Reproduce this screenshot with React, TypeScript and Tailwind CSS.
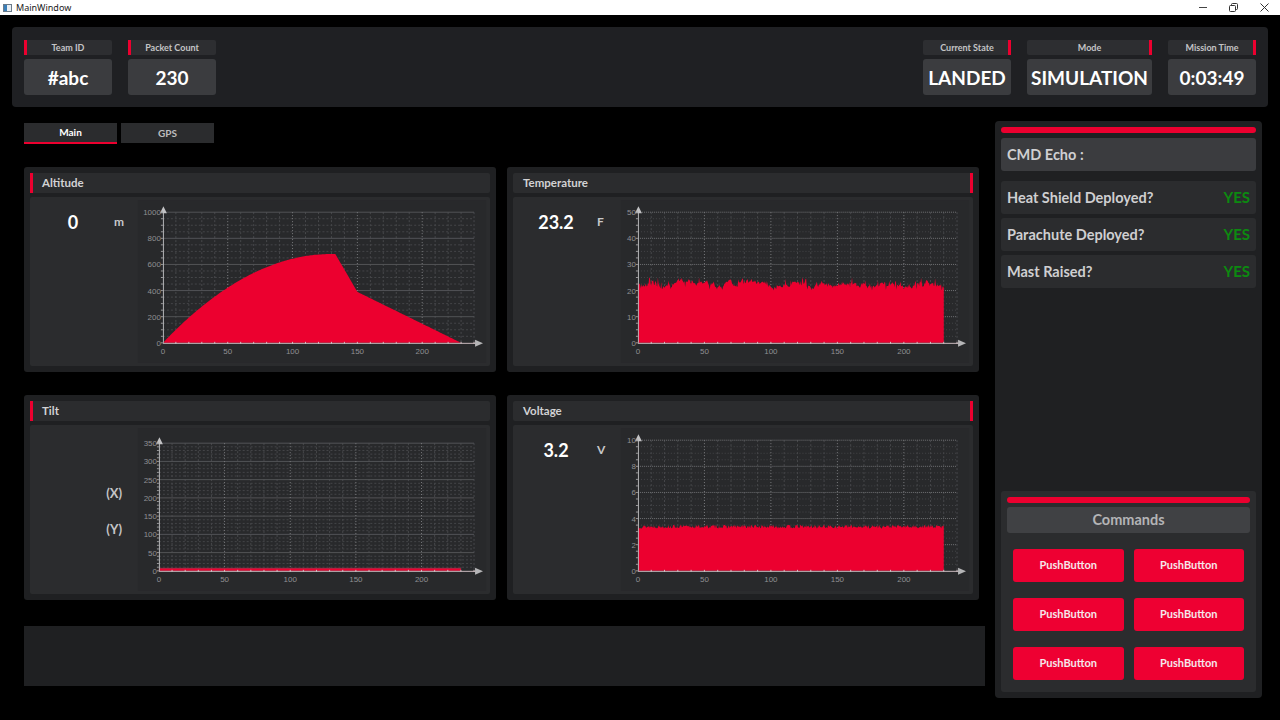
import React from "react";

const RED = "#ec002f";
const FONT = { fontFamily: "Lato, 'Open Sans', sans-serif" };

function rng(seed: number) {
  let a = seed;
  return () => {
    a |= 0;
    a = (a + 0x6d2b79f5) | 0;
    let t = Math.imul(a ^ (a >>> 15), 1 | a);
    t = (t + Math.imul(t ^ (t >>> 7), 61 | t)) ^ t;
    return ((t ^ (t >>> 14)) >>> 0) / 4294967296;
  };
}

type ChartProps = {
  x0: number;
  top: number;
  bottom: number;
  yMax: number;
  yLabels: number[];
  minorPer: number;
  dottedH?: boolean;
  kind: "alt" | "temp" | "tilt" | "volt";
};

function Chart({ x0, top, bottom, yMax, yLabels, minorPer, dottedH, kind }: ChartProps) {
  const right = 345;
  const xs = (u: number) => x0 + (u * (right - x0)) / 240;
  const ys = (v: number) => bottom - (v * (bottom - top)) / yMax;
  const step = yLabels[1] - yLabels[0];
  const minorStep = step / minorPer;

  const vMinor: number[] = [];
  const vMajor: number[] = [];
  for (let u = 10; u <= 240; u += 10) (u % 50 === 0 ? vMajor : vMinor).push(u);
  const hMinor: number[] = [];
  for (let v = minorStep; v <= yMax + 0.001; v += minorStep) {
    const isMajor = Math.abs(v / step - Math.round(v / step)) < 0.001;
    if (!isMajor) hMinor.push(v);
  }

  let area = "";
  if (kind === "alt") {
    const pts: string[] = [];
    for (let t = 0; t <= 230; t += 1) {
      let h: number;
      if (t <= 130) h = 680 * (1 - Math.pow(1 - t / 130, 2));
      else if (t <= 133) h = 680;
      else if (t <= 150) h = 680 - ((t - 133) / 17) * 290;
      else h = 390 - ((t - 150) / 80) * 390;
      pts.push(`${xs(t).toFixed(1)},${ys(h).toFixed(1)}`);
    }
    area = `M${xs(0)},${bottom} L${pts.join(" L")} L${xs(230)},${bottom} Z`;
  } else if (kind === "temp") {
    const r = rng(7);
    const pts: string[] = [];
    let walk = 0;
    for (let t = 0; t <= 230; t += 0.5) {
      walk = walk * 0.85 + (r() - 0.5) * 1.4;
      let v = 22.6 + walk + (r() - 0.5) * 1.2;
      if (r() > 0.93) v += 1.8;
      if (r() > 0.95) v -= 1.6;
      v = Math.max(20, Math.min(25, v));
      pts.push(`${xs(t).toFixed(1)},${ys(v).toFixed(1)}`);
    }
    area = `M${xs(0)},${bottom} L${pts.join(" L")} L${xs(230)},${bottom} Z`;
  } else if (kind === "volt") {
    const r = rng(13);
    const pts: string[] = [];
    for (let t = 0; t <= 230; t += 0.5) {
      const v = 3.38 + (r() - 0.5) * 0.28;
      pts.push(`${xs(t).toFixed(1)},${ys(v).toFixed(1)}`);
    }
    area = `M${xs(0)},${bottom} L${pts.join(" L")} L${xs(230)},${bottom} Z`;
  }

  return (
    <svg width={361} height={169} viewBox="0 0 361 169" className="block">
      <rect x={8} y={3} width={349} height={163} fill="#28292b" />
      {vMinor.map((u) => (
        <line key={"vm" + u} x1={xs(u)} x2={xs(u)} y1={top} y2={bottom} stroke="#47484b" strokeWidth={1} strokeDasharray="2 2" />
      ))}
      {hMinor.map((v, i) => (
        <line key={"hm" + i} x1={x0} x2={right} y1={ys(v)} y2={ys(v)} stroke="#444548" strokeWidth={1} strokeDasharray={dottedH ? "1 2" : "2 2"} />
      ))}
      {yLabels.filter((v) => v > 0).map((v) => (
        <line key={"hM" + v} x1={x0} x2={right} y1={ys(v)} y2={ys(v)} stroke={dottedH ? "#717275" : "#525356"} strokeWidth={1} strokeDasharray={dottedH ? "1 1" : undefined} />
      ))}
      {vMajor.map((u) => (
        <line key={"vM" + u} x1={xs(u)} x2={xs(u)} y1={top} y2={bottom} stroke="#7a7b7e" strokeWidth={1} strokeDasharray="1 2" />
      ))}
      {area && <path d={area} fill={RED} />}
      {kind === "tilt" && (
        <>
          <rect x={x0} y={bottom - 3} width={xs(230) - x0} height={3} fill="#b0203f" />
          <line x1={x0} x2={xs(230)} y1={bottom - 1} y2={bottom - 1} stroke={RED} strokeWidth={1.5} />
        </>
      )}
      <line x1={x0 + 0.5} x2={x0 + 0.5} y1={bottom} y2={top - 4} stroke="#b5b5b7" strokeWidth={1} />
      <polygon points={`${x0 - 3},${top + 1} ${x0 + 0.5},${top - 6} ${x0 + 4},${top + 1}`} fill="#c2c2c4" />
      {hMinor.concat(yLabels).map((v, i) => (
        <line key={"yt" + i} x1={x0 - 2} x2={x0} y1={ys(v)} y2={ys(v)} stroke="#9a9a9c" strokeWidth={1} />
      ))}
      <line x1={x0} x2={right + 4} y1={bottom + 0.5} y2={bottom + 0.5} stroke="#c9b9be" strokeWidth={1} />
      <polygon points={`${right + 1},${bottom - 3} ${right + 9},${bottom + 0.5} ${right + 1},${bottom + 4}`} fill="#b5b5b7" />
      {vMinor.concat(vMajor).map((u) => (
        <line key={"xt" + u} x1={xs(u)} x2={xs(u)} y1={bottom - 1} y2={bottom + 1} stroke="#d0c0c4" strokeWidth={1} />
      ))}
      {yLabels.map((v) => (
        <text key={"yl" + v} x={x0 - 2} y={ys(v) + 3} fontSize={8} fill="#8f8f92" textAnchor="end" fontFamily="'Liberation Sans', sans-serif">
          {v}
        </text>
      ))}
      {[0, 50, 100, 150, 200].map((u) => (
        <text key={"xl" + u} x={xs(u)} y={bottom + 11} fontSize={8} fill="#8f8f92" textAnchor="middle" fontFamily="'Liberation Sans', sans-serif">
          {u}
        </text>
      ))}
    </svg>
  );
}

function HeaderItem({ label, value, w, stripe }: { label: string; value: string; w: string; stripe: "left" | "right" }) {
  return (
    <div className={`flex flex-col gap-[4px] ${w}`}>
      <div className="relative h-[15px] bg-[#2d2e31] rounded-[2px] flex items-center justify-center">
        <div className={`absolute top-0 bottom-0 w-[3px] bg-[#ec002f] ${stripe === "left" ? "left-0" : "right-0"}`} />
        <span className="text-[9px] font-bold text-[#c4c4c6] leading-none">{label}</span>
      </div>
      <div className="h-[36px] bg-[#3b3c3f] rounded-[3px] flex items-center justify-center">
        <span className="text-[19px] font-bold text-white leading-none">{value}</span>
      </div>
    </div>
  );
}

function Panel({
  title,
  stripe,
  left,
  chart,
}: {
  title: string;
  stripe: "left" | "right";
  left: React.ReactNode;
  chart: React.ReactNode;
}) {
  return (
    <div className="h-[205px] bg-[#1f2022] rounded-[3px] p-[6px] flex flex-col gap-[4px]">
      <div className={`relative h-[20px] bg-[#2b2c2e] rounded-[2px] flex items-center ${stripe === "left" ? "pl-[12px]" : "pl-[10px]"}`}>
        <div className={`absolute top-0 bottom-0 w-[3px] bg-[#ec002f] ${stripe === "left" ? "left-0" : "right-0"}`} />
        <span className="text-[11.5px] font-bold text-[#d2d2d4]">{title}</span>
      </div>
      <div className="h-[169px] bg-[#2b2c2e] rounded-[2px] flex">
        <div className="w-[100px] shrink-0">{left}</div>
        {chart}
      </div>
    </div>
  );
}

function ValueUnit({ value, unit }: { value: string; unit: string }) {
  return (
    <div className="flex items-center pt-[13px] h-[37px] pl-[8px]">
      <span className="w-[70px] text-center text-[18px] font-bold text-white leading-[24px]">{value}</span>
      <span className="ml-[6px] text-[12px] font-bold text-[#c8c8ca] leading-[24px]">{unit}</span>
    </div>
  );
}

function StatusRow({ label }: { label: string }) {
  return (
    <div className="h-[33px] bg-[#2b2c2e] rounded-[3px] flex items-center justify-between px-[6px]">
      <span className="text-[14.5px] font-bold text-[#cfcfd1]">{label}</span>
      <span className="text-[15px] font-bold text-[#0c8a10]">YES</span>
    </div>
  );
}

export default function App() {
  return (
    <div className="w-[1280px] h-[720px] bg-black flex flex-col overflow-hidden" style={FONT}>
      <div className="h-[15px] bg-white flex items-center justify-between shrink-0">
        <div className="flex items-center gap-[4px] pl-[3px]">
          <div className="w-[9px] h-[8px] border border-[#6b7b8a] bg-[#e8eef4] flex">
            <div className="w-[3px] h-full bg-[#3a7fb8]" />
          </div>
          <span className="text-[9px] text-[#1a1a1a] leading-none" style={{ fontFamily: "'Noto Sans', sans-serif" }}>
            MainWindow
          </span>
        </div>
        <div className="flex items-center h-full text-[#222]">
          <div className="w-[30px] flex justify-center">
            <div className="w-[8px] h-px bg-[#444]" />
          </div>
          <div className="w-[30px] flex justify-center">
            <svg width="9" height="9" viewBox="0 0 9 9">
              <rect x="0.5" y="2.5" width="6" height="6" fill="none" stroke="#333" strokeWidth="1" rx="1" />
              <path d="M2.5 2.5 V1.5 a1 1 0 0 1 1 -1 H7.5 a1 1 0 0 1 1 1 V5.5 a1 1 0 0 1 -1 1 H6.5" fill="none" stroke="#333" strokeWidth="1" />
            </svg>
          </div>
          <div className="w-[32px] flex justify-center">
            <svg width="9" height="9" viewBox="0 0 9 9">
              <path d="M0.5 0.5 L8.5 8.5 M8.5 0.5 L0.5 8.5" stroke="#333" strokeWidth="1" />
            </svg>
          </div>
        </div>
      </div>

      <div className="px-[12px] pt-[12px] flex flex-col">
        <div className="h-[80px] bg-[#1f2023] rounded-[4px] pl-[12px] pr-[12px] pt-[13px] flex justify-between">
          <div className="flex gap-[16px]">
            <HeaderItem label="Team ID" value="#abc" w="w-[88px]" stripe="left" />
            <HeaderItem label="Packet Count" value="230" w="w-[88px]" stripe="left" />
          </div>
          <div className="flex gap-[16px]">
            <HeaderItem label="Current State" value="LANDED" w="w-[88px]" stripe="right" />
            <HeaderItem label="Mode" value="SIMULATION" w="w-[125px]" stripe="right" />
            <HeaderItem label="Mission Time" value="0:03:49" w="w-[88px]" stripe="right" />
          </div>
        </div>

        <div className="flex mt-[14px] gap-[10px]">
          <div className="ml-[12px] w-[961px] flex flex-col">
            <div className="flex gap-[4px] mt-[2px]">
              <div className="w-[93px] h-[21px] bg-[#2b2c2e] border-b-2 border-[#ec002f] flex items-center justify-center">
                <span className="text-[10px] font-bold text-white">Main</span>
              </div>
              <div className="w-[93px] h-[20px] bg-[#2b2c2e] flex items-center justify-center">
                <span className="text-[10px] font-bold text-[#bdbdbf]">GPS</span>
              </div>
            </div>

            <div className="grid grid-cols-[472px_472px] gap-x-[11px] gap-y-[23px] mt-[23px]">
              <Panel
                title="Altitude"
                stripe="left"
                left={<ValueUnit value="0" unit="m" />}
                chart={<Chart kind="alt" x0={33} top={15} bottom={146} yMax={1000} yLabels={[0, 200, 400, 600, 800, 1000]} minorPer={4} />}
              />
              <Panel
                title="Temperature"
                stripe="right"
                left={<ValueUnit value="23.2" unit="F" />}
                chart={<Chart kind="temp" x0={25} top={15} bottom={146} yMax={50} yLabels={[0, 10, 20, 30, 40, 50]} minorPer={4} dottedH />}
              />
              <Panel
                title="Tilt"
                stripe="left"
                left={
                  <div className="flex flex-col items-end pr-[8px] pt-[60px] gap-[20px]">
                    <span className="text-[13px] font-bold text-[#c4c4c6] leading-[16px]">(X)</span>
                    <span className="text-[13px] font-bold text-[#c4c4c6] leading-[16px]">(Y)</span>
                  </div>
                }
                chart={<Chart kind="tilt" x0={29} top={18} bottom={146} yMax={350} yLabels={[0, 50, 100, 150, 200, 250, 300, 350]} minorPer={5} />}
              />
              <Panel
                title="Voltage"
                stripe="right"
                left={<ValueUnit value="3.2" unit="V" />}
                chart={<Chart kind="volt" x0={25} top={15} bottom={146} yMax={10} yLabels={[0, 2, 4, 6, 8, 10]} minorPer={4} dottedH />}
              />
            </div>

            <div className="mt-[26px] h-[60px] bg-[#1f2022]" />
          </div>

          <div className="w-[267px] h-[577px] bg-[#1f2022] rounded-[4px] p-[6px] flex flex-col">
            <div className="h-[6px] rounded-full bg-[#ec002f]" />
            <div className="mt-[5px] h-[33px] bg-[#3b3c3f] rounded-[3px] flex items-center px-[6px]">
              <span className="text-[14.5px] font-bold text-[#cfcfd1]">CMD Echo :</span>
            </div>
            <div className="mt-[10px] flex flex-col gap-[4px]">
              <StatusRow label="Heat Shield Deployed?" />
              <StatusRow label="Parachute Deployed?" />
              <StatusRow label="Mast Raised?" />
            </div>
            <div className="flex-1" />
            <div className="h-[201px] bg-[#2b2c2e] rounded-[3px] pt-[6px] px-[6px] flex flex-col">
              <div className="h-[6px] rounded-full bg-[#ec002f]" />
              <div className="mt-[4px] h-[26px] bg-[#404144] rounded-[3px] flex items-center justify-center">
                <span className="text-[14.5px] font-bold text-[#b4b4b6]">Commands</span>
              </div>
              <div className="mt-[16px] px-[6px] grid grid-cols-2 gap-x-[10px] gap-y-[16px]">
                {Array.from({ length: 6 }).map((_, i) => (
                  <div key={i} className="h-[33px] bg-[#ee0032] rounded-[3px] flex items-center justify-center">
                    <span className="text-[11px] font-bold text-[#f6e6ea]">PushButton</span>
                  </div>
                ))}
              </div>
            </div>
          </div>
        </div>
      </div>
    </div>
  );
}
